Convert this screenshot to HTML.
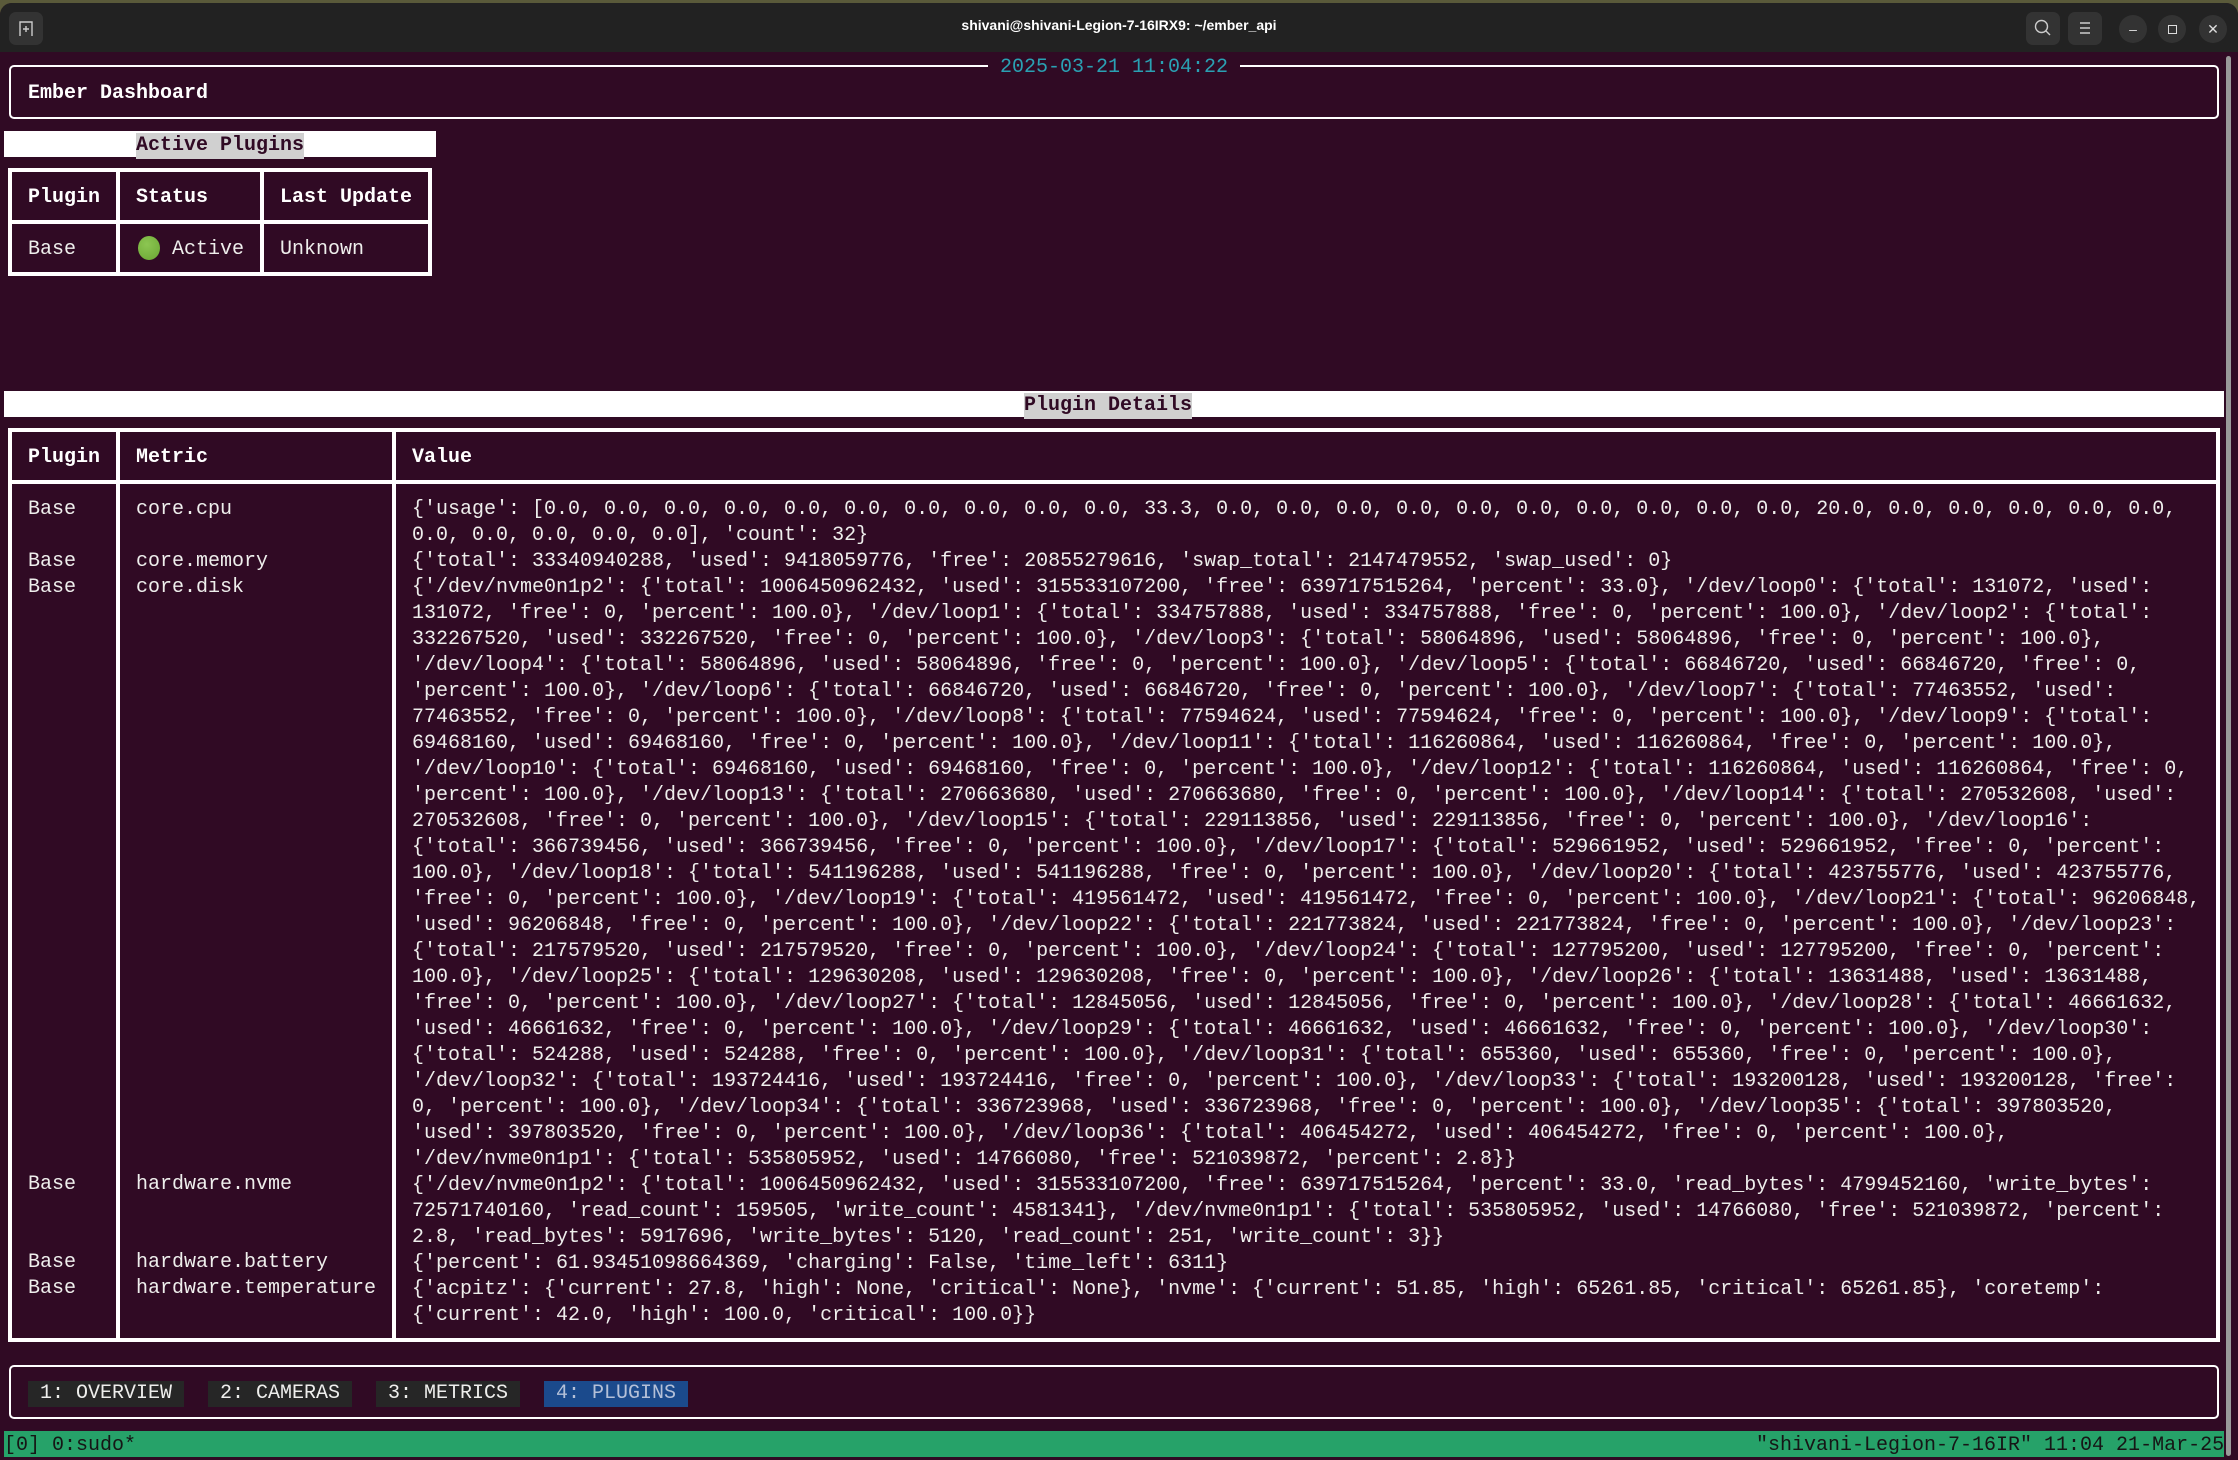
<!DOCTYPE html>
<html><head><meta charset="utf-8"><style>
*{margin:0;padding:0;box-sizing:border-box}
html,body{width:2238px;height:1460px;overflow:hidden;background:#5a5a3a}
#win{position:absolute;left:0;top:3px;width:2238px;height:1457px;background:#300a24;border-radius:12px 12px 0 0;overflow:hidden}
#tb{position:absolute;left:0;top:0;width:2238px;height:49px;background:#222222}
.t{position:absolute;font-family:"Liberation Mono","DejaVu Sans Mono",monospace;font-size:20px;line-height:26px;height:26px;white-space:pre;color:#eeeeec;margin-top:2px}
.b{font-weight:bold;color:#fff}
.h{position:absolute;background:#fff}
.btn{position:absolute;background:#333;border-radius:7px}
.cir{position:absolute;background:#333;border-radius:50%;width:28px;height:28px;color:#ddd;font:14px "Liberation Sans",sans-serif;text-align:center;line-height:28px}
</style></head><body>
<div id="win">
<div id="tb">
 <div class="btn" style="left:9px;top:9px;width:34px;height:33px"></div>
 <svg style="position:absolute;left:16px;top:16px" width="20" height="20" viewBox="0 0 20 20"><path d="M4 17V3h12v14M10 7v6M7 10h6" stroke="#ccc" stroke-width="1.4" fill="none"/></svg>
 <div style="position:absolute;left:0;width:2238px;top:14px;text-align:center;font:bold 14px 'Liberation Sans',sans-serif;color:#fff">shivani@shivani-Legion-7-16IRX9: ~/ember_api</div>
 <div class="btn" style="left:2026px;top:9px;width:34px;height:33px"></div>
 <svg style="position:absolute;left:2033px;top:15px" width="20" height="20" viewBox="0 0 20 20"><circle cx="8.5" cy="8.5" r="6" stroke="#ccc" stroke-width="1.4" fill="none"/><path d="M13 13l4 4" stroke="#ccc" stroke-width="1.4"/></svg>
 <div class="btn" style="left:2068px;top:9px;width:34px;height:33px"></div>
 <svg style="position:absolute;left:2075px;top:15px" width="20" height="20" viewBox="0 0 20 20"><path d="M5 5h10M5 10h10M5 15h10" stroke="#ccc" stroke-width="1.4"/></svg>
 <div class="cir" style="left:2119px;top:12px">&#8211;</div>
 <div class="cir" style="left:2158px;top:12px"><span style="display:inline-block;width:9px;height:9px;border:1.5px solid #ddd;margin-top:9px"></span></div>
 <div class="cir" style="left:2199px;top:12px">&#10005;</div>
</div>
</div>
<div style="position:absolute;left:2226px;top:56px;width:5px;height:1400px;background:#999;border-radius:3px"></div>

<!-- Ember box -->
<div style="position:absolute;left:9px;top:65px;width:2210px;height:54px;border:2px solid #fff;border-radius:5px"></div>
<div class="t" style="left:988px;top:53px;background:#300a24;color:#2aa1b3"> 2025-03-21 11:04:22 </div>
<div class="t b" style="left:28px;top:79px">Ember Dashboard</div>

<!-- Active Plugins -->
<div class="h" style="left:4px;top:131px;width:432px;height:26px"></div>
<div class="t b" style="left:136px;top:131px;background:#d0d0d0;color:#300a24">Active Plugins</div>
<div class="h" style="left:8px;top:168px;width:424px;height:4px"></div>
<div class="h" style="left:8px;top:220px;width:424px;height:4px"></div>
<div class="h" style="left:8px;top:272px;width:424px;height:4px"></div>
<div class="h" style="left:8px;top:168px;width:4px;height:108px"></div>
<div class="h" style="left:116px;top:168px;width:4px;height:108px"></div>
<div class="h" style="left:260px;top:168px;width:4px;height:108px"></div>
<div class="h" style="left:428px;top:168px;width:4px;height:108px"></div>
<div class="t b" style="left:28px;top:183px">Plugin</div>
<div class="t b" style="left:136px;top:183px">Status</div>
<div class="t b" style="left:280px;top:183px">Last Update</div>
<div class="t" style="left:28px;top:235px">Base</div>
<div style="position:absolute;left:138px;top:236px;width:22px;height:24px;border-radius:50%;background:radial-gradient(circle at 40% 35%,#8cc652,#6aa533)"></div>
<div class="t" style="left:172px;top:235px">Active</div>
<div class="t" style="left:280px;top:235px">Unknown</div>

<!-- Plugin Details -->
<div class="h" style="left:4px;top:391px;width:2220px;height:26px"></div>
<div class="t b" style="left:1024px;top:391px;background:#d0d0d0;color:#300a24">Plugin Details</div>
<div class="h" style="left:8px;top:428px;width:2212px;height:4px"></div>
<div class="h" style="left:8px;top:480px;width:2212px;height:4px"></div>
<div class="h" style="left:8px;top:1338px;width:2212px;height:4px"></div>
<div class="h" style="left:8px;top:428px;width:4px;height:914px"></div>
<div class="h" style="left:116px;top:428px;width:4px;height:914px"></div>
<div class="h" style="left:392px;top:428px;width:4px;height:914px"></div>
<div class="h" style="left:2216px;top:428px;width:4px;height:914px"></div>
<div class="t b" style="left:28px;top:443px">Plugin</div>
<div class="t b" style="left:136px;top:443px">Metric</div>
<div class="t b" style="left:412px;top:443px">Value</div>

<div class="t" style="left:28px;top:495px">Base</div><div class="t" style="left:136px;top:495px">core.cpu</div>
<div class="t" style="left:28px;top:547px">Base</div><div class="t" style="left:136px;top:547px">core.memory</div>
<div class="t" style="left:28px;top:573px">Base</div><div class="t" style="left:136px;top:573px">core.disk</div>
<div class="t" style="left:28px;top:1170px">Base</div><div class="t" style="left:136px;top:1170px">hardware.nvme</div>
<div class="t" style="left:28px;top:1248px">Base</div><div class="t" style="left:136px;top:1248px">hardware.battery</div>
<div class="t" style="left:28px;top:1274px">Base</div><div class="t" style="left:136px;top:1274px">hardware.temperature</div>

<div class="t" style="left:412px;top:495px;height:832px">{'usage': [0.0, 0.0, 0.0, 0.0, 0.0, 0.0, 0.0, 0.0, 0.0, 0.0, 33.3, 0.0, 0.0, 0.0, 0.0, 0.0, 0.0, 0.0, 0.0, 0.0, 0.0, 20.0, 0.0, 0.0, 0.0, 0.0, 0.0,
0.0, 0.0, 0.0, 0.0, 0.0], 'count': 32}
{'total': 33340940288, 'used': 9418059776, 'free': 20855279616, 'swap_total': 2147479552, 'swap_used': 0}
{'/dev/nvme0n1p2': {'total': 1006450962432, 'used': 315533107200, 'free': 639717515264, 'percent': 33.0}, '/dev/loop0': {'total': 131072, 'used':
131072, 'free': 0, 'percent': 100.0}, '/dev/loop1': {'total': 334757888, 'used': 334757888, 'free': 0, 'percent': 100.0}, '/dev/loop2': {'total':
332267520, 'used': 332267520, 'free': 0, 'percent': 100.0}, '/dev/loop3': {'total': 58064896, 'used': 58064896, 'free': 0, 'percent': 100.0},
'/dev/loop4': {'total': 58064896, 'used': 58064896, 'free': 0, 'percent': 100.0}, '/dev/loop5': {'total': 66846720, 'used': 66846720, 'free': 0,
'percent': 100.0}, '/dev/loop6': {'total': 66846720, 'used': 66846720, 'free': 0, 'percent': 100.0}, '/dev/loop7': {'total': 77463552, 'used':
77463552, 'free': 0, 'percent': 100.0}, '/dev/loop8': {'total': 77594624, 'used': 77594624, 'free': 0, 'percent': 100.0}, '/dev/loop9': {'total':
69468160, 'used': 69468160, 'free': 0, 'percent': 100.0}, '/dev/loop11': {'total': 116260864, 'used': 116260864, 'free': 0, 'percent': 100.0},
'/dev/loop10': {'total': 69468160, 'used': 69468160, 'free': 0, 'percent': 100.0}, '/dev/loop12': {'total': 116260864, 'used': 116260864, 'free': 0,
'percent': 100.0}, '/dev/loop13': {'total': 270663680, 'used': 270663680, 'free': 0, 'percent': 100.0}, '/dev/loop14': {'total': 270532608, 'used':
270532608, 'free': 0, 'percent': 100.0}, '/dev/loop15': {'total': 229113856, 'used': 229113856, 'free': 0, 'percent': 100.0}, '/dev/loop16':
{'total': 366739456, 'used': 366739456, 'free': 0, 'percent': 100.0}, '/dev/loop17': {'total': 529661952, 'used': 529661952, 'free': 0, 'percent':
100.0}, '/dev/loop18': {'total': 541196288, 'used': 541196288, 'free': 0, 'percent': 100.0}, '/dev/loop20': {'total': 423755776, 'used': 423755776,
'free': 0, 'percent': 100.0}, '/dev/loop19': {'total': 419561472, 'used': 419561472, 'free': 0, 'percent': 100.0}, '/dev/loop21': {'total': 96206848,
'used': 96206848, 'free': 0, 'percent': 100.0}, '/dev/loop22': {'total': 221773824, 'used': 221773824, 'free': 0, 'percent': 100.0}, '/dev/loop23':
{'total': 217579520, 'used': 217579520, 'free': 0, 'percent': 100.0}, '/dev/loop24': {'total': 127795200, 'used': 127795200, 'free': 0, 'percent':
100.0}, '/dev/loop25': {'total': 129630208, 'used': 129630208, 'free': 0, 'percent': 100.0}, '/dev/loop26': {'total': 13631488, 'used': 13631488,
'free': 0, 'percent': 100.0}, '/dev/loop27': {'total': 12845056, 'used': 12845056, 'free': 0, 'percent': 100.0}, '/dev/loop28': {'total': 46661632,
'used': 46661632, 'free': 0, 'percent': 100.0}, '/dev/loop29': {'total': 46661632, 'used': 46661632, 'free': 0, 'percent': 100.0}, '/dev/loop30':
{'total': 524288, 'used': 524288, 'free': 0, 'percent': 100.0}, '/dev/loop31': {'total': 655360, 'used': 655360, 'free': 0, 'percent': 100.0},
'/dev/loop32': {'total': 193724416, 'used': 193724416, 'free': 0, 'percent': 100.0}, '/dev/loop33': {'total': 193200128, 'used': 193200128, 'free':
0, 'percent': 100.0}, '/dev/loop34': {'total': 336723968, 'used': 336723968, 'free': 0, 'percent': 100.0}, '/dev/loop35': {'total': 397803520,
'used': 397803520, 'free': 0, 'percent': 100.0}, '/dev/loop36': {'total': 406454272, 'used': 406454272, 'free': 0, 'percent': 100.0},
'/dev/nvme0n1p1': {'total': 535805952, 'used': 14766080, 'free': 521039872, 'percent': 2.8}}
{'/dev/nvme0n1p2': {'total': 1006450962432, 'used': 315533107200, 'free': 639717515264, 'percent': 33.0, 'read_bytes': 4799452160, 'write_bytes':
72571740160, 'read_count': 159505, 'write_count': 4581341}, '/dev/nvme0n1p1': {'total': 535805952, 'used': 14766080, 'free': 521039872, 'percent':
2.8, 'read_bytes': 5917696, 'write_bytes': 5120, 'read_count': 251, 'write_count': 3}}
{'percent': 61.93451098664369, 'charging': False, 'time_left': 6311}
{'acpitz': {'current': 27.8, 'high': None, 'critical': None}, 'nvme': {'current': 51.85, 'high': 65261.85, 'critical': 65261.85}, 'coretemp':
{'current': 42.0, 'high': 100.0, 'critical': 100.0}}</div>

<!-- Tabs -->
<div style="position:absolute;left:9px;top:1365px;width:2210px;height:54px;border:2px solid #fff;border-radius:5px"></div>
<div class="t" style="left:28px;top:1379px;background:#262626"> 1: OVERVIEW </div>
<div class="t" style="left:208px;top:1379px;background:#262626"> 2: CAMERAS </div>
<div class="t" style="left:376px;top:1379px;background:#262626"> 3: METRICS </div>
<div class="t" style="left:544px;top:1379px;background:#1b4a8c;color:#b4c0d8"> 4: PLUGINS </div>

<!-- status -->
<div style="position:absolute;left:4px;top:1431px;width:2220px;height:26px;background:#26a269"></div>
<div class="t" style="left:4px;top:1431px;color:#161616">[0] 0:sudo*</div>
<div class="t" style="left:1756px;top:1431px;color:#161616">"shivani-Legion-7-16IR" 11:04 21-Mar-25</div>
</body></html>
